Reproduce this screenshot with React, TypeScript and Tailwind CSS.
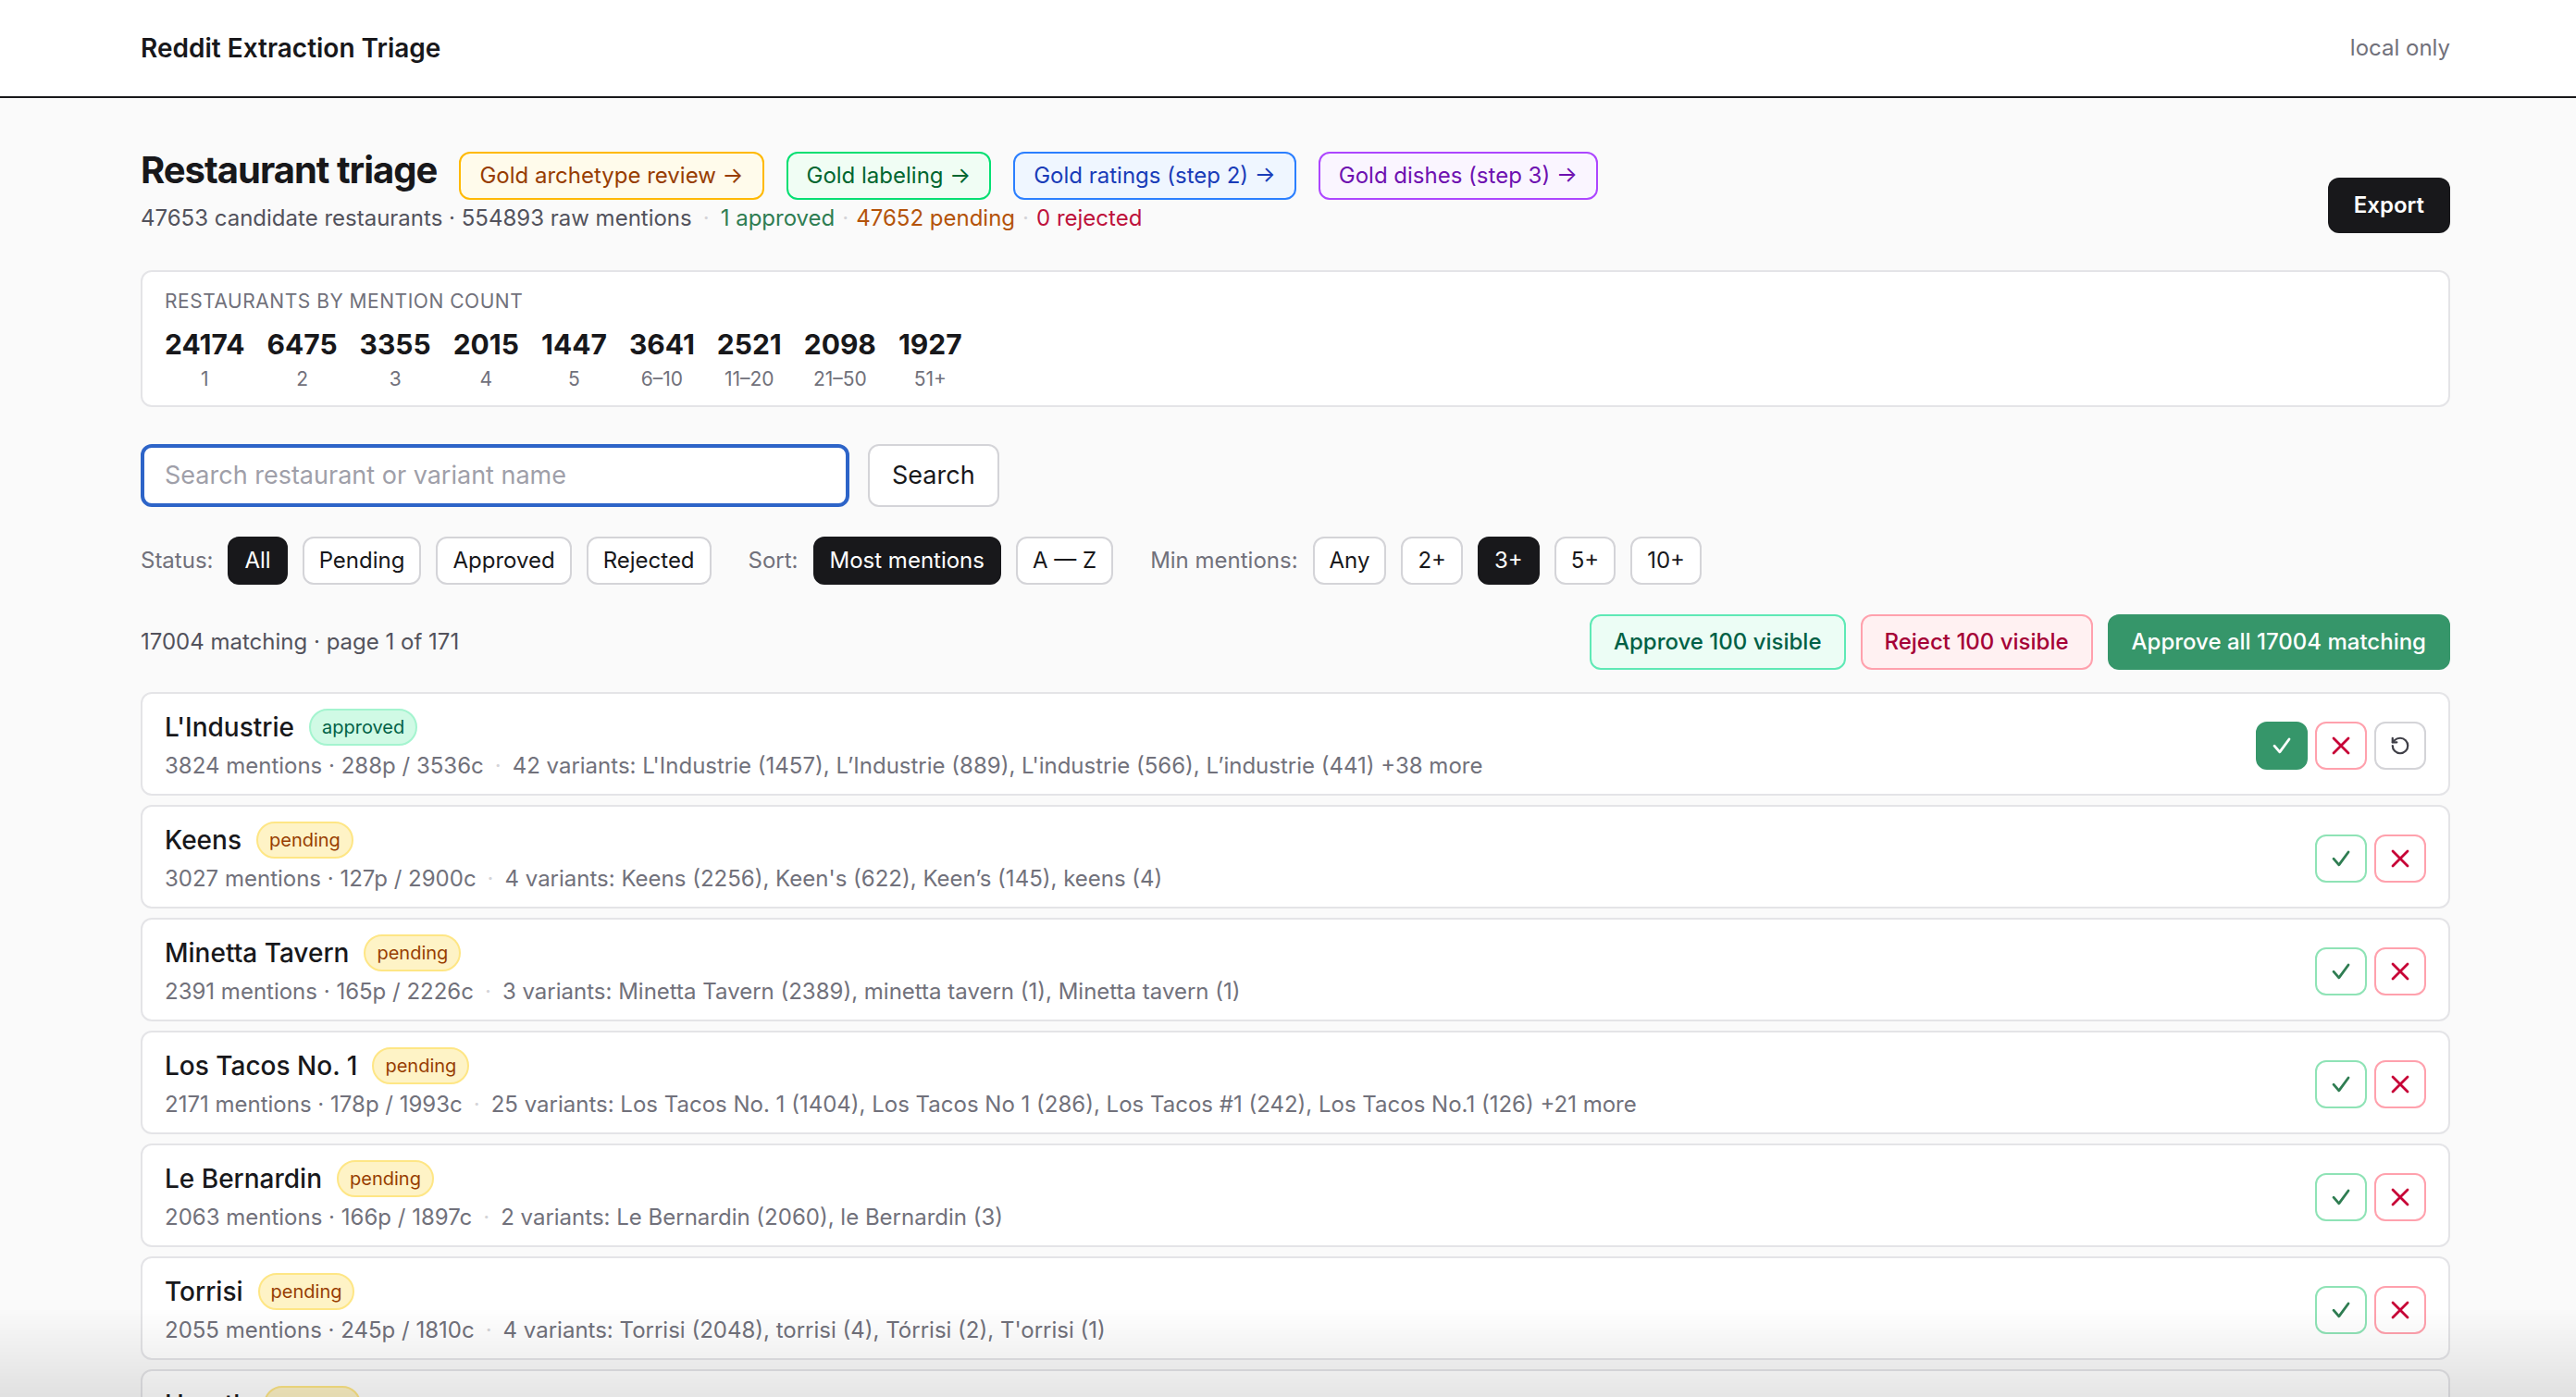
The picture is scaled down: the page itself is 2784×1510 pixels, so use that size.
import React, { useState } from 'react';
import { RotateCcw } from 'lucide-react';

type Status = 'approved' | 'pending' | 'rejected';

const BUCKETS = [
  { count: 24174, label: '1' },
  { count: 6475, label: '2' },
  { count: 3355, label: '3' },
  { count: 2015, label: '4' },
  { count: 1447, label: '5' },
  { count: 3641, label: '6–10' },
  { count: 2521, label: '11–20' },
  { count: 2098, label: '21–50' },
  { count: 1927, label: '51+' },
];

const ROWS: { name: string; status: Status; mentions: number; posts: number; comments: number; variants: string }[] = [
  { name: "L'Industrie", status: 'approved', mentions: 3824, posts: 288, comments: 3536, variants: "42 variants: L'Industrie (1457), L’Industrie (889), L'industrie (566), L’industrie (441) +38 more" },
  { name: 'Keens', status: 'pending', mentions: 3027, posts: 127, comments: 2900, variants: "4 variants: Keens (2256), Keen's (622), Keen’s (145), keens (4)" },
  { name: 'Minetta Tavern', status: 'pending', mentions: 2391, posts: 165, comments: 2226, variants: '3 variants: Minetta Tavern (2389), minetta tavern (1), Minetta tavern (1)' },
  { name: 'Los Tacos No. 1', status: 'pending', mentions: 2171, posts: 178, comments: 1993, variants: '25 variants: Los Tacos No. 1 (1404), Los Tacos No 1 (286), Los Tacos #1 (242), Los Tacos No.1 (126) +21 more' },
  { name: 'Le Bernardin', status: 'pending', mentions: 2063, posts: 166, comments: 1897, variants: '2 variants: Le Bernardin (2060), le Bernardin (3)' },
  { name: 'Torrisi', status: 'pending', mentions: 2055, posts: 245, comments: 1810, variants: "4 variants: Torrisi (2048), torrisi (4), Tórrisi (2), T'orrisi (1)" },
  { name: 'Hearth', status: 'pending', mentions: 2012, posts: 201, comments: 1811, variants: '3 variants: Hearth (2005), hearth (5), HEARTH (2)' },
  { name: 'Via Carota', status: 'pending', mentions: 1988, posts: 190, comments: 1798, variants: '2 variants: Via Carota (1984), via carota (4)' },
];

const CheckIcon = () => (
  <svg width="10" height="9" viewBox="0 0 10 9" fill="none" stroke="currentColor" strokeWidth="1.4" strokeLinecap="round" strokeLinejoin="round">
    <path d="M1 4.6 L3.9 7.9 L9 1" />
  </svg>
);

const XIcon = () => (
  <svg width="10" height="10" viewBox="0 0 10 10" fill="none" stroke="currentColor" strokeWidth="1.4" strokeLinecap="round">
    <path d="M1 1 L9 9 M9 1 L1 9" />
  </svg>
);

function Pill({ active, children }: { active?: boolean; children: React.ReactNode }) {
  return (
    <button
      className={
        active
          ? 'rounded-md border border-zinc-900 bg-zinc-900 px-2 py-1 text-[12px] leading-4 text-white'
          : 'rounded-md border border-zinc-300 bg-white px-2 py-1 text-[12px] leading-4 text-zinc-900'
      }
    >
      {children}
    </button>
  );
}

function Badge({ status }: { status: Status }) {
  if (status === 'approved') {
    return <span className="rounded-full border border-emerald-200 bg-emerald-100 px-1.5 text-[10px] leading-[18px] text-emerald-800">approved</span>;
  }
  if (status === 'rejected') {
    return <span className="rounded-full border border-rose-200 bg-rose-100 px-1.5 text-[10px] leading-[18px] text-rose-800">rejected</span>;
  }
  return <span className="rounded-full border border-amber-200 bg-amber-100 px-1.5 text-[10px] leading-[18px] text-amber-800">pending</span>;
}

export default function App() {
  const [query, setQuery] = useState('');

  return (
    <div className="min-h-screen bg-[#fafafa] font-[Inter,'Noto_Sans',sans-serif] text-zinc-900 [zoom:2]">
      {/* Top bar */}
      <header className="border-b border-zinc-900 bg-white">
        <div className="mx-auto flex max-w-[1256px] items-center justify-between py-3.5 pl-2">
          <div className="text-[14px] font-semibold leading-6">Reddit Extraction Triage</div>
          <div className="text-[12px] leading-6 text-zinc-500">local only</div>
        </div>
      </header>

      <main className="mx-auto max-w-[1256px] pb-10 pl-2 pt-[26px]">
        {/* Title + links */}
        <div className="flex items-end justify-between">
          <div>
            <div className="flex items-baseline gap-3">
              <h1 className="text-[20px] font-bold leading-[26px] tracking-tight">Restaurant triage</h1>
              <a className="rounded-md border border-amber-400 bg-amber-50 px-2.5 py-1 text-[12px] leading-4 text-amber-800">Gold archetype review →</a>
              <a className="rounded-md border border-green-400 bg-green-50 px-2.5 py-1 text-[12px] leading-4 text-green-800">Gold labeling →</a>
              <a className="rounded-md border border-blue-500 bg-blue-50 px-2.5 py-1 text-[12px] leading-4 text-blue-800">Gold ratings (step 2) →</a>
              <a className="rounded-md border border-purple-500 bg-purple-50 px-2.5 py-1 text-[12px] leading-4 text-purple-800">Gold dishes (step 3) →</a>
            </div>
            <p className="mt-0.5 text-[12px] leading-4 text-zinc-600">
              47653 candidate restaurants · 554893 raw mentions
              <span className="mx-1.5 text-zinc-300">·</span>
              <span className="text-[#2f7d52]">1 approved</span>
              <span className="mx-1 text-zinc-300">·</span>
              <span className="text-[#b45309]">47652 pending</span>
              <span className="mx-1 text-zinc-300">·</span>
              <span className="text-[#be123c]">0 rejected</span>
            </p>
          </div>
          <button className="rounded-md bg-zinc-900 px-3.5 py-[5px] text-[12px] font-semibold leading-5 text-white">Export</button>
        </div>

        {/* Histogram */}
        <div className="mt-5 rounded-md border border-zinc-200 bg-white px-3 pb-1.5 pt-2">
          <div className="text-[10.5px] uppercase leading-4 tracking-wide text-zinc-500">Restaurants by mention count</div>
          <div className="mt-1 flex gap-3">
            {BUCKETS.map((b) => (
              <div key={b.label} className="flex flex-col items-center">
                <div className="text-[15px] font-bold leading-[22px]">{b.count}</div>
                <div className="text-[10.5px] leading-4 text-zinc-500">{b.label}</div>
              </div>
            ))}
          </div>
        </div>

        {/* Search */}
        <div className="mt-5 flex gap-2.5">
          <input
            value={query}
            onChange={(e) => setQuery(e.target.value)}
            placeholder="Search restaurant or variant name"
            className="w-[383px] rounded-md border-2 border-[#2d64c8] bg-white px-[11px] py-1 text-[13.5px] leading-[22px] outline-none placeholder:text-zinc-400"
          />
          <button className="rounded-md border border-zinc-300 bg-white px-3 text-[13.5px] leading-[22px]">Search</button>
        </div>

        {/* Filters */}
        <div className="mt-4 flex items-center gap-5">
          <div className="flex items-center gap-2">
            <span className="text-[12px] text-zinc-500">Status:</span>
            <Pill active>All</Pill>
            <Pill>Pending</Pill>
            <Pill>Approved</Pill>
            <Pill>Rejected</Pill>
          </div>
          <div className="flex items-center gap-2">
            <span className="text-[12px] text-zinc-500">Sort:</span>
            <Pill active>Most mentions</Pill>
            <Pill>A — Z</Pill>
          </div>
          <div className="flex items-center gap-2">
            <span className="text-[12px] text-zinc-500">Min mentions:</span>
            <Pill>Any</Pill>
            <Pill>2+</Pill>
            <Pill active>3+</Pill>
            <Pill>5+</Pill>
            <Pill>10+</Pill>
          </div>
        </div>

        {/* Bulk actions */}
        <div className="mt-4 flex items-center justify-between">
          <div className="text-[12px] text-zinc-600">17004 matching · page 1 of 171</div>
          <div className="flex gap-2">
            <button className="rounded-md border border-emerald-300 bg-emerald-50 px-3 py-1 text-[12px] font-medium leading-5 text-emerald-800">Approve 100 visible</button>
            <button className="rounded-md border border-rose-300 bg-rose-50 px-3 py-1 text-[12px] font-medium leading-5 text-rose-800">Reject 100 visible</button>
            <button className="rounded-md border border-[#36966a] bg-[#36966a] px-3 py-1 text-[12px] font-medium leading-5 text-white">Approve all 17004 matching</button>
          </div>
        </div>

        {/* Rows */}
        <div className="mt-3 flex flex-col gap-[5px]">
          {ROWS.map((r) => (
            <div key={r.name} className="flex items-center justify-between rounded-md border border-zinc-200 bg-white px-3 pb-1.5 pt-2">
              <div className="min-w-0">
                <div className="flex items-center gap-2">
                  <span className="text-[14px] font-medium leading-5">{r.name}</span>
                  <Badge status={r.status} />
                </div>
                <div className="mt-0.5 text-[12px] leading-[18px] text-zinc-500">
                  {r.mentions} mentions · {r.posts}p / {r.comments}c
                  <span className="mx-1.5 text-zinc-300">·</span>
                  {r.variants}
                </div>
              </div>
              <div className="flex shrink-0 gap-1">
                {r.status === 'approved' ? (
                  <button className="flex h-[26px] w-7 items-center justify-center rounded-md border border-[#36966a] bg-[#36966a] text-white">
                    <CheckIcon />
                  </button>
                ) : (
                  <button className="flex h-[26px] w-7 items-center justify-center rounded-md border border-[#8fe3b6] bg-white text-[#2f7d52]">
                    <CheckIcon />
                  </button>
                )}
                <button className="flex h-[26px] w-7 items-center justify-center rounded-md border border-rose-300 bg-white text-rose-700">
                  <XIcon />
                </button>
                {r.status !== 'pending' && (
                  <button className="flex h-[26px] w-7 items-center justify-center rounded-md border border-zinc-300 bg-white text-zinc-700">
                    <RotateCcw size={11} strokeWidth={2.4} />
                  </button>
                )}
              </div>
            </div>
          ))}
        </div>
      </main>

      <div className="pointer-events-none fixed inset-x-0 bottom-0 h-12 bg-linear-to-b from-transparent to-black/10" />
    </div>
  );
}
